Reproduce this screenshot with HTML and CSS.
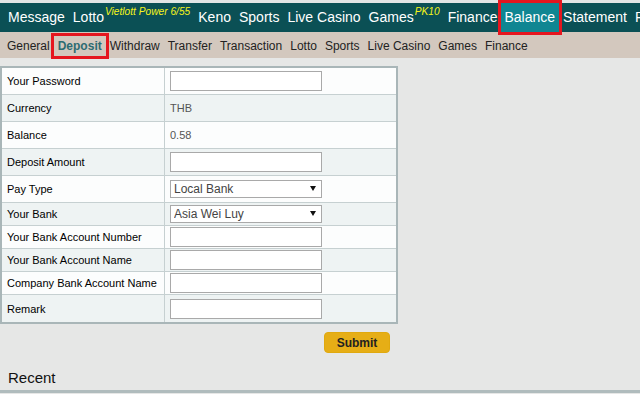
FILE: index.html
```html
<!DOCTYPE html>
<html lang="en">

<head>
  <meta charset="UTF-8">
  <meta name="viewport" content="width=device-width, initial-scale=1.0">
  <title>Balance - Deposit</title>
  <link rel="stylesheet" href="styles.css">
</head>

<body>
  <div class="topline"></div>
  <nav class="mainnav">
    <a>Message</a>
    <a>Lotto<sup class="tag">Vietlott Power 6/55</sup></a>
    <a>Keno</a>
    <a>Sports</a>
    <a>Live Casino</a>
    <a>Games<sup class="tag">PK10</sup></a>
    <a>Finance</a>
    <a class="active">Balance</a>
    <a>Statement</a>
    <a>Profile</a>
  </nav>
  <nav class="subnav">
    <a>General</a>
    <a class="active">Deposit</a>
    <a>Withdraw</a>
    <a>Transfer</a>
    <a>Transaction</a>
    <a>Lotto</a>
    <a>Sports</a>
    <a>Live Casino</a>
    <a>Games</a>
    <a>Finance</a>
  </nav>

  <div class="content">
    <table class="form-table">
      <tr>
        <td class="label">Your Password</td>
        <td class="field"><input type="password" class="text-input"></td>
      </tr>
      <tr>
        <td class="label">Currency</td>
        <td class="field value">THB</td>
      </tr>
      <tr>
        <td class="label">Balance</td>
        <td class="field value">0.58</td>
      </tr>
      <tr>
        <td class="label">Deposit Amount</td>
        <td class="field"><input type="text" class="text-input"></td>
      </tr>
      <tr>
        <td class="label">Pay Type</td>
        <td class="field">
          <span class="select">
            <select>
              <option>Local Bank</option>
            </select>
          </span>
        </td>
      </tr>
      <tr class="short">
        <td class="label">Your Bank</td>
        <td class="field">
          <span class="select">
            <select>
              <option>Asia Wei Luy</option>
            </select>
          </span>
        </td>
      </tr>
      <tr class="short">
        <td class="label">Your Bank Account Number</td>
        <td class="field"><input type="text" class="text-input"></td>
      </tr>
      <tr class="short">
        <td class="label">Your Bank Account Name</td>
        <td class="field"><input type="text" class="text-input"></td>
      </tr>
      <tr class="short">
        <td class="label">Company Bank Account Name</td>
        <td class="field"><input type="text" class="text-input"></td>
      </tr>
      <tr>
        <td class="label">Remark</td>
        <td class="field"><input type="text" class="text-input"></td>
      </tr>
    </table>

    <div class="actions">
      <button class="submit">Submit</button>
    </div>

    <h3 class="recent">Recent</h3>
    <div class="recent-box"></div>
  </div>
</body>
</html>
```

FILE: styles.css
```css
body {
  margin: 0;
  background-color: #e6e7e6;
  font-family: "Liberation Sans", Arial, sans-serif;
  color: #111;
  overflow: hidden;
}
.topline {
  height: 3px;
  background-color: #e2e5e5;
}
.mainnav {
  display: flex;
  height: 29px;
  padding-left: 4px;
  background-color: #0b5055;
  white-space: nowrap;
}
.mainnav a {
  flex-shrink: 0;
  display: block;
  padding: 0 4px;
  font-size: 14px;
  line-height: 29px;
  color: #fff;
}
.mainnav a.active {
  padding: 0 4px 0 3px;
  background-color: #108692;
  outline: 3px solid #e5161f;
  position: relative;
  z-index: 1;
}
.tag {
  font-size: 10.2px;
  font-style: italic;
  color: #f6f41a;
  vertical-align: 7px;
  line-height: 0;
  margin-left: 1px;
}
.subnav {
  display: flex;
  height: 26px;
  box-sizing: border-box;
  padding: 4px 3px 2px;
  background-color: #d3c8be;
  white-space: nowrap;
}
.subnav a {
  display: block;
  padding: 0 4px;
  font-size: 12px;
  line-height: 20px;
  color: #222;
}
.subnav a.active {
  color: #2d6c72;
  font-weight: bold;
  outline: 3px solid #e5161f;
}
.content {
  padding-top: 8px;
}
.form-table {
  width: 398px;
  border: 2px solid #a9b6b8;
  border-spacing: 0;
  font-size: 11px;
}
.form-table tr {
  height: 27px;
  background-color: #fcfdfd;
}
.form-table tr:nth-child(even) {
  background-color: #eef3f3;
}
.form-table tr.short {
  height: 23px;
}
.form-table td {
  padding: 0 5px;
  border-bottom: 1px solid #c6d0d1;
  vertical-align: middle;
}
.form-table tr:last-child td {
  border-bottom: none;
}
.label {
  width: 152px;
  border-right: 1px solid #c6d0d1;
  color: #000;
}
.value {
  color: #555;
  padding-left: 6px;
}
.text-input {
  display: block;
  box-sizing: border-box;
  width: 152px;
  height: 20px;
  margin: 0;
  border: 1px solid #a9a9a9;
  background: #fff;
}
.select {
  position: relative;
  display: block;
  width: 152px;
  height: 18px;
}
.select select {
  appearance: none;
  -webkit-appearance: none;
  box-sizing: border-box;
  width: 152px;
  height: 18px;
  margin: 0;
  padding: 0 3px;
  border: 1px solid #a9a9a9;
  border-radius: 0;
  background: #fff;
  font-family: "Liberation Sans", Arial, sans-serif;
  font-size: 12px;
  color: #444;
}
.select::after {
  content: "";
  position: absolute;
  right: 6px;
  top: 6px;
  border-left: 3px solid transparent;
  border-right: 3px solid transparent;
  border-top: 5px solid #111;
}
.actions {
  width: 398px;
  box-sizing: border-box;
  padding-right: 8px;
  margin-top: 8px;
  text-align: right;
}
.submit {
  width: 66px;
  height: 21px;
  padding: 0;
  border: 1px solid #e0a90f;
  border-radius: 4px;
  background-color: #e6ae16;
  font-family: "Liberation Sans", Arial, sans-serif;
  font-size: 12px;
  font-weight: bold;
  color: #222;
}
.recent {
  margin: 16px 0 0;
  padding-left: 8px;
  font-size: 15px;
  font-weight: normal;
  line-height: 17px;
}
.recent-box {
  margin-top: 4px;
  border-top: 3px solid #b0bcbd;
  height: 20px;
}
```
